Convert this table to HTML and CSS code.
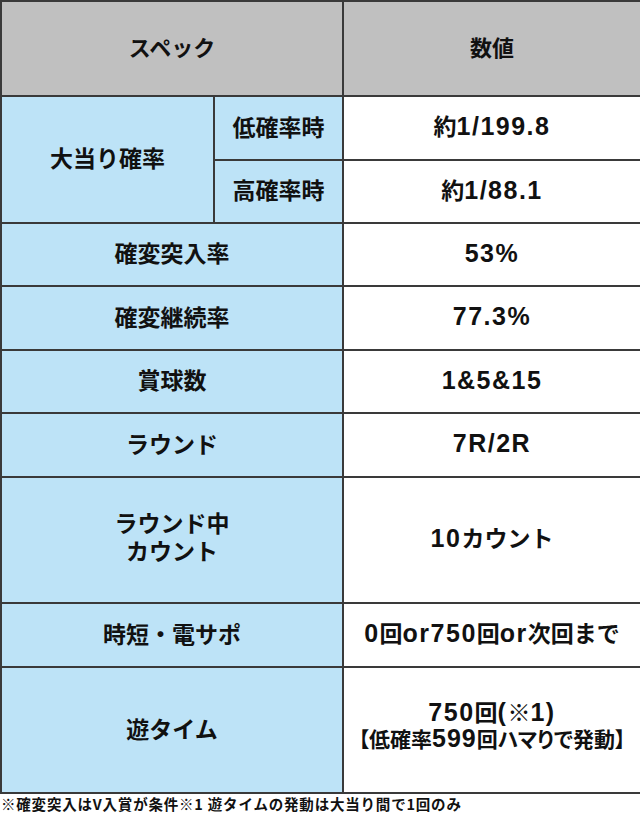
FILE: index.html
```html
<!DOCTYPE html>
<html lang="ja">
<head>
<meta charset="utf-8">
<link rel="stylesheet" href="styles.css">
</head>
<body>
<table class="spec">
  <colgroup>
    <col class="c1"><col class="c2"><col class="c3">
  </colgroup>
  <tr class="r95">
    <th colspan="2">スペック</th>
    <th>数値</th>
  </tr>
  <tr class="r64">
    <td class="lbl" rowspan="2">大当り確率</td>
    <td class="lbl">低確率時</td>
    <td class="val">約<span class="n">1/199.8</span></td>
  </tr>
  <tr class="r63">
    <td class="lbl">高確率時</td>
    <td class="val">約<span class="n">1/88.1</span></td>
  </tr>
  <tr class="r63">
    <td class="lbl" colspan="2">確変突入率</td>
    <td class="val"><span class="n">53%</span></td>
  </tr>
  <tr class="r64">
    <td class="lbl" colspan="2">確変継続率</td>
    <td class="val"><span class="n">77.3%</span></td>
  </tr>
  <tr class="r63">
    <td class="lbl" colspan="2">賞球数</td>
    <td class="val"><span class="n">1&amp;5&amp;15</span></td>
  </tr>
  <tr class="r64">
    <td class="lbl" colspan="2">ラウンド</td>
    <td class="val"><span class="n">7R/2R</span></td>
  </tr>
  <tr class="r126">
    <td class="lbl two" colspan="2">ラウンド中<br>カウント</td>
    <td class="val"><span class="n">10</span>カウント</td>
  </tr>
  <tr class="r64">
    <td class="lbl" colspan="2">時短・電サポ</td>
    <td class="val"><span class="n">0</span>回<span class="n">or750</span>回<span class="n">or</span>次回まで</td>
  </tr>
  <tr class="r126">
    <td class="lbl" colspan="2">遊タイム</td>
    <td class="val lift">
      <div class="line"><span class="n">750</span>回<span class="n">(</span>※<span class="n">1)</span></div>
      <div class="line sub">【低確率<span class="n">599</span>回ハマりで発動】</div>
    </td>
  </tr>
</table>
<p class="note">※確変突入はV入賞が条件※1 遊タイムの発動は大当り間で1回のみ</p>
</body>
</html>
```
FILE: styles.css
```css
html, body {
  margin: 0;
  padding: 0;
  background: #fff;
}
body {
  font-family: "Noto Sans CJK JP", sans-serif;
  font-weight: bold;
  color: #111;
}
.spec {
  width: 640px;
  border-collapse: collapse;
  table-layout: fixed;
}
.c1 { width: 213px; }
.c2 { width: 129px; }
.c3 { width: 298px; }
.spec th, .spec td {
  border: 2px solid #3a3a3a;
  text-align: center;
  vertical-align: middle;
  padding: 0 0 5px;
  font-size: 23px;
  line-height: 26px;
  font-weight: bold;
}
.spec th {
  background: #c0c0c0;
  font-size: 22px;
}
.r95 { height: 95px; }
.r64 { height: 64px; }
.r63 { height: 63px; }
.r126 { height: 126px; }
.lbl { background: #bde3f7; }
.spec .two { line-height: 28px; padding-bottom: 8px; }
.val { background: #fff; }
.spec .lift { padding-bottom: 12px; }
.line {
  line-height: 26px;
  white-space: nowrap;
}
.n {
  font-family: "Liberation Sans", Arial, sans-serif;
  font-size: 25px;
  letter-spacing: 1.5px;
}
.sub {
  font-size: 21px;
  font-feature-settings: "palt";
}
.sub .n {
  font-size: 25px;
  letter-spacing: 1px;
}
.note {
  margin: 0 0 0 1px;
  font-size: 14.5px;
  line-height: 19px;
  font-family: "Noto Sans CJK JP", sans-serif;
  font-weight: bold;
  letter-spacing: 0.8px;
}
```
